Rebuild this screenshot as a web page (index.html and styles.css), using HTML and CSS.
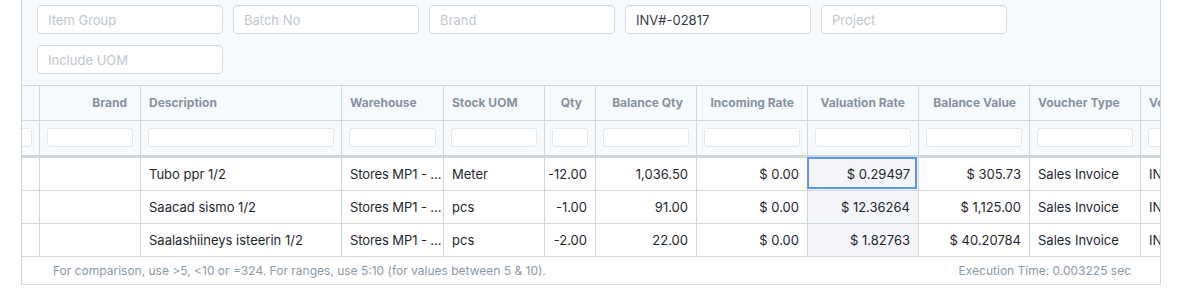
FILE: index.html
```html
<!DOCTYPE html>
<html>
<head>
<meta charset="utf-8">
<link rel="stylesheet" href="styles.css">
</head>
<body>
<div class="report">
  <div class="filters">
    <input class="fi" placeholder="Item Group">
    <input class="fi" placeholder="Batch No">
    <input class="fi" placeholder="Brand">
    <input class="fi" value="INV#-02817">
    <input class="fi" placeholder="Project">
    <input class="fi" placeholder="Include UOM">
  </div>
  <div class="grid-wrap">
    <div class="dt">
      <div class="row hrow">
        <div class="c"></div>
        <div class="c r">Brand</div>
        <div class="c">Description</div>
        <div class="c">Warehouse</div>
        <div class="c">Stock UOM</div>
        <div class="c r">Qty</div>
        <div class="c r">Balance Qty</div>
        <div class="c r">Incoming Rate</div>
        <div class="c r">Valuation Rate</div>
        <div class="c r">Balance Value</div>
        <div class="c">Voucher Type</div>
        <div class="c">Voucher No</div>
      </div>
      <div class="row frow">
        <div class="c"><input class="ci"></div><div class="c"><input class="ci"></div><div class="c"><input class="ci"></div><div class="c"><input class="ci"></div><div class="c"><input class="ci"></div><div class="c"><input class="ci"></div><div class="c"><input class="ci"></div><div class="c"><input class="ci"></div><div class="c"><input class="ci"></div><div class="c"><input class="ci"></div><div class="c"><input class="ci"></div><div class="c"><input class="ci"></div>
      </div>
      <div class="row drow">
        <div class="c"></div><div class="c"></div>
        <div class="c">Tubo ppr 1/2</div>
        <div class="c wh">Stores MP1 - ...</div>
        <div class="c">Meter</div>
        <div class="c r">-12.00</div>
        <div class="c r">1,036.50</div>
        <div class="c r">$ 0.00</div>
        <div class="c r hl focus">$ 0.29497</div>
        <div class="c r">$ 305.73</div>
        <div class="c">Sales Invoice</div>
        <div class="c">INV#-02817</div>
      </div>
      <div class="row drow">
        <div class="c"></div><div class="c"></div>
        <div class="c">Saacad sismo 1/2</div>
        <div class="c wh">Stores MP1 - ...</div>
        <div class="c">pcs</div>
        <div class="c r">-1.00</div>
        <div class="c r">91.00</div>
        <div class="c r">$ 0.00</div>
        <div class="c r hl">$ 12.36264</div>
        <div class="c r">$ 1,125.00</div>
        <div class="c">Sales Invoice</div>
        <div class="c">INV#-02817</div>
      </div>
      <div class="row drow">
        <div class="c"></div><div class="c"></div>
        <div class="c">Saalashiineys isteerin 1/2</div>
        <div class="c wh">Stores MP1 - ...</div>
        <div class="c">pcs</div>
        <div class="c r">-2.00</div>
        <div class="c r">22.00</div>
        <div class="c r">$ 0.00</div>
        <div class="c r hl">$ 1.82763</div>
        <div class="c r">$ 40.20784</div>
        <div class="c">Sales Invoice</div>
        <div class="c">INV#-02817</div>
      </div>
    </div>
  </div>
  <div class="foot">
    <span>For comparison, use &gt;5, &lt;10 or =324. For ranges, use 5:10 (for values between 5 &amp; 10).</span>
    <span>Execution Time: 0.003225 sec</span>
  </div>
</div>
</body>
</html>
```
FILE: styles.css
```css
* { box-sizing: border-box; }
html, body { margin: 0; padding: 0; background: #fff; }
body { font-family: Inter, "Noto Sans", sans-serif; color: #1f272e; }

.report {
  margin-left: 21px;
  width: 1140px;
  border: 1px solid #d1d8dd;
  border-top: none;
  overflow: hidden;
}

.filters {
  background: #f7fafc;
  display: grid;
  grid-template-columns: repeat(5, 186px);
  column-gap: 10px;
  row-gap: 11px;
  padding: 5px 0 11px 15px;
}
.fi {
  height: 29px;
  width: 186px;
  border: 1px solid #d1d8dd;
  border-radius: 4px;
  background: #fff;
  padding: 0 10px;
  font: 13px Inter, "Noto Sans", sans-serif;
  color: #333c44;
  outline: none;
}
.fi::placeholder { color: #c0c6cc; }

.grid-wrap {
  overflow: hidden;
  border-top: 1px solid #d1d8dd;
}
.dt {
  margin-left: -22px;
  width: 1310px;
  font-size: 13px;
}
.row {
  display: grid;
  grid-template-columns: 40px 101px 201px 102px 101px 51px 101px 111px 111px 111px 111px 150px;
}
.c {
  display: flex;
  align-items: center;
  min-width: 0;
  padding: 0 8px;
  white-space: nowrap;
  overflow: hidden;
  border-right: 1px solid #d1d8dd;
  border-bottom: 1px solid #d1d8dd;
}
.c.r { justify-content: flex-end; }
.c.wh { padding-right: 2px; letter-spacing: -0.1px; }

.hrow .c {
  background: #f7fafc;
  height: 35px;
  padding-bottom: 2px;
  font-size: 12px;
  font-weight: 700;
  color: #8792a0;
}
.hrow .c.r { padding-right: 13px; }

.frow .c {
  background: #f7fafc;
  height: 37px;
  padding: 0 7px 2px;
  border-bottom-width: 3px;
}
.ci {
  display: block;
  width: 100%;
  height: 19px;
  border: 1px solid #e3e7eb;
  border-radius: 3px;
  background: #fff;
  outline: none;
}

.drow .c { height: 33px; color: #1f272e; }
.drow .c.hl { background: #f4f5f9; }
.drow .c.focus { position: relative; overflow: visible; }
.drow .c.focus::after {
  content: "";
  position: absolute;
  left: -1px;
  right: 1px;
  top: -1px;
  bottom: 1px;
  border: 2px solid #5b97f0;
}

.foot {
  display: flex;
  justify-content: space-between;
  align-items: center;
  height: 27px;
  padding: 0 29px 0 31px;
  font-size: 12px;
  color: #8d99a6;
}
```
